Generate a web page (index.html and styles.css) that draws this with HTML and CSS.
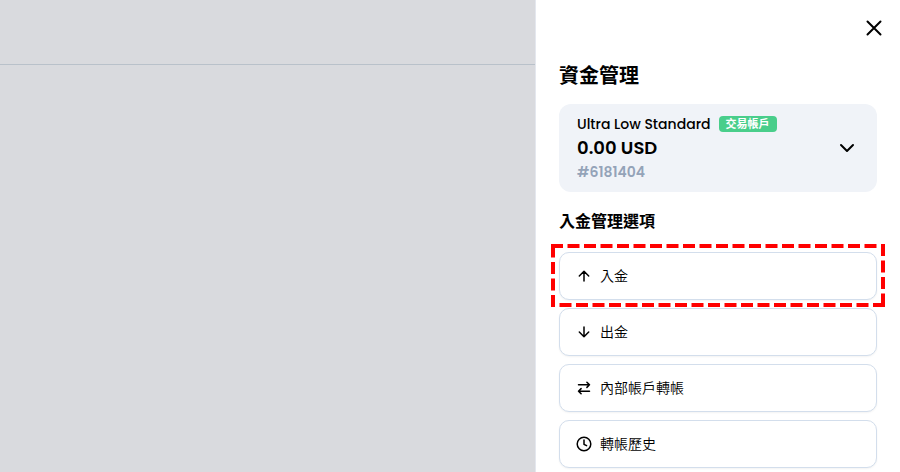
FILE: index.html
```
<!DOCTYPE html>
<html lang="zh-Hant">
<head>
  <meta charset="UTF-8">
  <meta name="viewport" content="width=device-width, initial-scale=1">
  <title>資金管理</title>
  <link rel="stylesheet" href="styles.css">
</head>
<body>
  <div class="layout">
    <!-- Dimmed page behind the drawer -->
    <div class="backdrop">
      <div class="topbar"></div>
    </div>

    <aside class="drawer">
      <button class="close-btn" type="button" aria-label="關閉">
        <svg width="16" height="16" viewBox="0 0 16 16"><path d="M1.500 1.500l13 13M14.500 1.500l-13 13"/></svg>
      </button>

      <h1>資金管理</h1>

      <button class="account" type="button">
        <span class="account-info">
          <span class="account-name">Ultra Low Standard <span class="badge">交易帳戶</span></span>
          <span class="balance">0.00 USD</span>
          <span class="account-id">#6181404</span>
        </span>
        <svg class="chevron" width="16" height="16" viewBox="0 0 16 16"><path d="M2 5l6 6 6-6"/></svg>
      </button>

      <h2>入金管理選項</h2>

      <div class="options">
        <div class="highlight">
          <button class="option" type="button">
            <svg width="16" height="16" viewBox="0 0 16 16"><path d="M8 13V3.300M3.300 8L8 3.300 12.700 8"/></svg>
            入金
          </button>
          <svg class="dashes" viewBox="0 0 334 63" preserveAspectRatio="none">
            <path d="M0 2H332V63"/>
            <path d="M334 61H2V0"/>
          </svg>
        </div>
        <button class="option" type="button">
          <svg width="16" height="16" viewBox="0 0 16 16"><path d="M8 3v9.700M3.300 8L8 12.700 12.700 8"/></svg>
          出金
        </button>
        <button class="option" type="button">
          <svg width="16" height="16" viewBox="0 0 16 16"><path d="M2.500 4.800h11M10.900 2.200l2.600 2.600-2.600 2.600M13.500 11.200h-11M5.100 8.600l-2.600 2.600 2.600 2.600"/></svg>
          內部帳戶轉帳
        </button>
        <button class="option" type="button">
          <svg width="16" height="16" viewBox="0 0 16 16"><circle cx="8" cy="8" r="6.800"/><path d="M8 4v4.300l2.600 1.400"/></svg>
          轉帳歷史
        </button>
      </div>
    </aside>
  </div>
</body>
</html>
```
FILE: styles.css
```
* {
  box-sizing: border-box;
}

body {
  margin: 0;
  font-family: Poppins, Inter, "Noto Sans CJK TC", sans-serif;
  font-size: 14px;
  color: #000;
  background: #fff;
}

.layout {
  display: flex;
  min-height: 100vh;
}

.backdrop {
  flex: 1;
  background: #d9dade;
}

.topbar {
  height: 65px;
  border-bottom: 1px solid #b9c1ca;
}

.drawer {
  display: flex;
  flex-direction: column;
  width: 365px;
  max-width: 100%;
  padding: 16px 23px 4px;
  border-left: 1px solid #e4e7ee;
  background: #fff;
}

button {
  font: inherit;
  color: inherit;
  cursor: pointer;
}

svg {
  flex: none;
  fill: none;
  stroke: #000;
  stroke-width: 1.5;
  stroke-linecap: round;
  stroke-linejoin: round;
}

.close-btn {
  display: flex;
  align-self: flex-end;
  margin-right: -9px;
  padding: 4px;
  border: none;
  background: none;
}

.close-btn svg,
.chevron {
  stroke-width: 2;
}

h1 {
  margin: 20px 0 12px;
  font-size: 20px;
  font-weight: 600;
  line-height: 32px;
}

.account {
  display: flex;
  align-items: center;
  justify-content: space-between;
  padding: 8px 22px 8px 18px;
  border: none;
  border-radius: 12px;
  background: #f0f3f8;
  text-align: left;
}

.account-info {
  display: flex;
  flex-direction: column;
  line-height: 24px;
}

.account-name {
  display: flex;
  align-items: center;
  gap: 8px;
  font-weight: 500;
}

.badge {
  padding: 0 7px;
  border-radius: 4px;
  background: #49ce8b;
  color: #fff;
  font-size: 11px;
  font-weight: 700;
  line-height: 16px;
}

.balance {
  font-size: 18px;
  font-weight: 600;
}

.account-id {
  color: #94a3b8;
  font-weight: 600;
}

h2 {
  margin: 18px 0;
  font-size: 16px;
  font-weight: 700;
  line-height: 24px;
}

.options {
  display: flex;
  flex-direction: column;
  gap: 8px;
}

.option {
  display: flex;
  align-items: center;
  gap: 8px;
  width: 100%;
  height: 48px;
  padding: 0 16px;
  border: 1px solid #d3deec;
  border-radius: 10px;
  background: #fff;
  box-shadow: 0 1px 2px rgba(0, 0, 0, 0.05);
  font-weight: 350;
}

/* Dashed marker drawn round the deposit button */
.highlight {
  position: relative;
}

.dashes {
  position: absolute;
  top: -8px;
  left: -8px;
  width: calc(100% + 16px);
  height: 63px;
  stroke: #f00;
  stroke-width: 4;
  stroke-linecap: butt;
  stroke-linejoin: miter;
  stroke-dasharray: 12 4.5;
  pointer-events: none;
  z-index: 1;
}
```
